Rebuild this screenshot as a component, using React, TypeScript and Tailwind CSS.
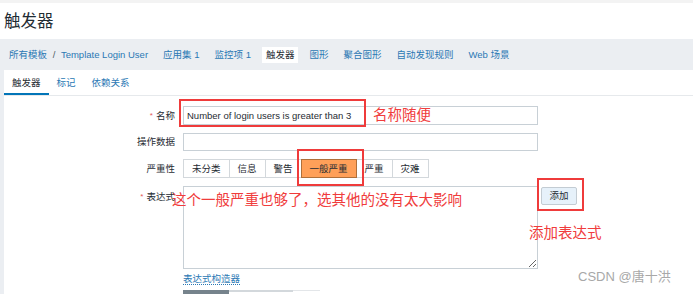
import React from "react";

const nav = ["应用集 1", "监控项 1", "触发器", "图形", "聚合图形", "自动发现规则", "Web 场景"];
const tabs = ["触发器", "标记", "依赖关系"];
const levels = ["未分类", "信息", "警告", "一般严重", "严重", "灾难"];

function Label({ text, req }: { text: string; req?: boolean }) {
  return (
    <div className="w-[171px] shrink-0 text-right text-[#1f2c33] pr-0">
      {req && <span className="text-[#e45959] mr-[3px] text-[8px] align-top">*</span>}
      {text}
    </div>
  );
}

export default function App() {
  return (
    <div
      className="relative w-[693px] h-[294px] overflow-hidden bg-[#ebeef2] text-[9.5px] leading-[12px]"
      style={{ fontFamily: '"Liberation Sans", Arial, "Noto Sans CJK SC", sans-serif' }}
    >
      <div className="h-[3px] bg-[#f3f3f3]" />
      <div className="h-[36px] bg-white pl-[4px] flex items-center">
        <h1 className="text-[16.5px] text-[#1f2c33] font-normal">触发器</h1>
      </div>

      {/* breadcrumb / nav */}
      <div className="h-[31px] flex items-center pl-[5px] gap-[7px] text-[#2a78b4]">
        <div className="px-[4px] whitespace-nowrap">
          所有模板 <span className="text-[#4f5b63] mx-[3px]">/</span> Template Login User
        </div>
        {nav.map((n) => (
          <div
            key={n}
            className={
              n === "触发器"
                ? "px-[4px] h-[16px] flex items-center bg-white text-[#1f2c33]"
                : "px-[4px] whitespace-nowrap"
            }
          >
            {n}
          </div>
        ))}
      </div>

      <div className="pl-[4px] h-[224px]">
        <div className="bg-white h-full">
          <div className="h-[26px] flex border-b border-[#e6e9ec]">
            {tabs.map((t, i) => (
              <div
                key={t}
                className={
                  i === 0
                    ? "h-full px-[8px] flex items-center text-[#1f2c33] shadow-[inset_0_-2px_0_#0275b8]"
                    : "h-full px-[8px] flex items-center text-[#2a78b4]"
                }
              >
                {t}
              </div>
            ))}
          </div>

          <div className="pt-[10px] flex flex-col gap-[8px]">
            <div className="flex items-center h-[19px] gap-[8px]">
              <Label text="名称" req />
              <div className="w-[355px] h-full border border-[#c8d0d6] flex items-center pl-[3px] text-[#1f2c33]">
                Number of login users is greater than 3
              </div>
            </div>
            <div className="flex items-center h-[18px] gap-[8px]">
              <Label text="操作数据" />
              <div className="w-[355px] h-full border border-[#c8d0d6]" />
            </div>
            <div className="flex items-center h-[19px] gap-[8px]">
              <Label text="严重性" />
              <div className="flex h-full">
                {levels.map((l, i) => (
                  <div
                    key={l}
                    className={
                      l === "一般严重"
                        ? "-ml-px h-full px-[8px] flex items-center border border-[#b0703a] bg-[#ffa059] text-[#1f2c33] relative"
                        : i === 0
                        ? "h-full px-[8px] flex items-center border border-[#d3d8dc] bg-white text-[#1f2c33]"
                        : "-ml-px h-full px-[8px] flex items-center border border-[#d3d8dc] bg-white text-[#1f2c33]"
                    }
                  >
                    {l}
                  </div>
                ))}
              </div>
            </div>
            <div className="flex items-start gap-[8px]">
              <div className="pt-[5px]">
                <Label text="表达式" req />
              </div>
              <textarea
                readOnly
                className="w-[355px] h-[83px] border border-[#c8d0d6] outline-none resize"
              />
              <button className="-ml-[5px] mt-[1px] w-[36px] h-[18px] border border-[#c3ccd3] bg-[#e6f1fa] text-[#1f2c33] rounded-[2px] text-[9.5px]">
                添加
              </button>
            </div>
          </div>

          <div className="ml-[179px] mt-[4px]">
            <span className="text-[#2a78b4] border-b border-dotted border-[#2a78b4]">表达式构造器</span>
          </div>
          <div className="ml-[179px] mt-[5px] flex">
            <div className="w-[46px] h-[4px] bg-[#76838c]" />
            <div className="w-[64px] h-[4px] border-t-2 border-[#d3d8dc]" />
            <div className="w-[27px] h-[4px] border-t border-[#e3e6e9]" />
          </div>
        </div>
      </div>

      {/* annotations */}
      <div className="absolute left-[179px] top-[99px] w-[187px] h-[28px] border-2 border-[#ef3b3b]" />
      <div className="absolute left-[297px] top-[149px] w-[67px] h-[37px] border-2 border-[#ef3b3b]" />
      <div className="absolute left-[537px] top-[178px] w-[47px] h-[33px] border-2 border-[#ef3b3b]" />
      <div className="absolute left-[373px] top-[106px] text-[14.5px] leading-[18px] text-[#f03c3c] whitespace-nowrap">
        名称随便
      </div>
      <div className="absolute left-[172px] top-[191px] text-[14.5px] leading-[18px] text-[#f03c3c] whitespace-nowrap">
        这个一般严重也够了，选其他的没有太大影响
      </div>
      <div className="absolute left-[529px] top-[224px] text-[14.5px] leading-[18px] text-[#f03c3c] whitespace-nowrap">
        添加表达式
      </div>
      <div className="absolute left-[578px] top-[269px] text-[13px] leading-[16px] text-[#a8a8a8] whitespace-nowrap">
        CSDN @唐十洪
      </div>
    </div>
  );
}
